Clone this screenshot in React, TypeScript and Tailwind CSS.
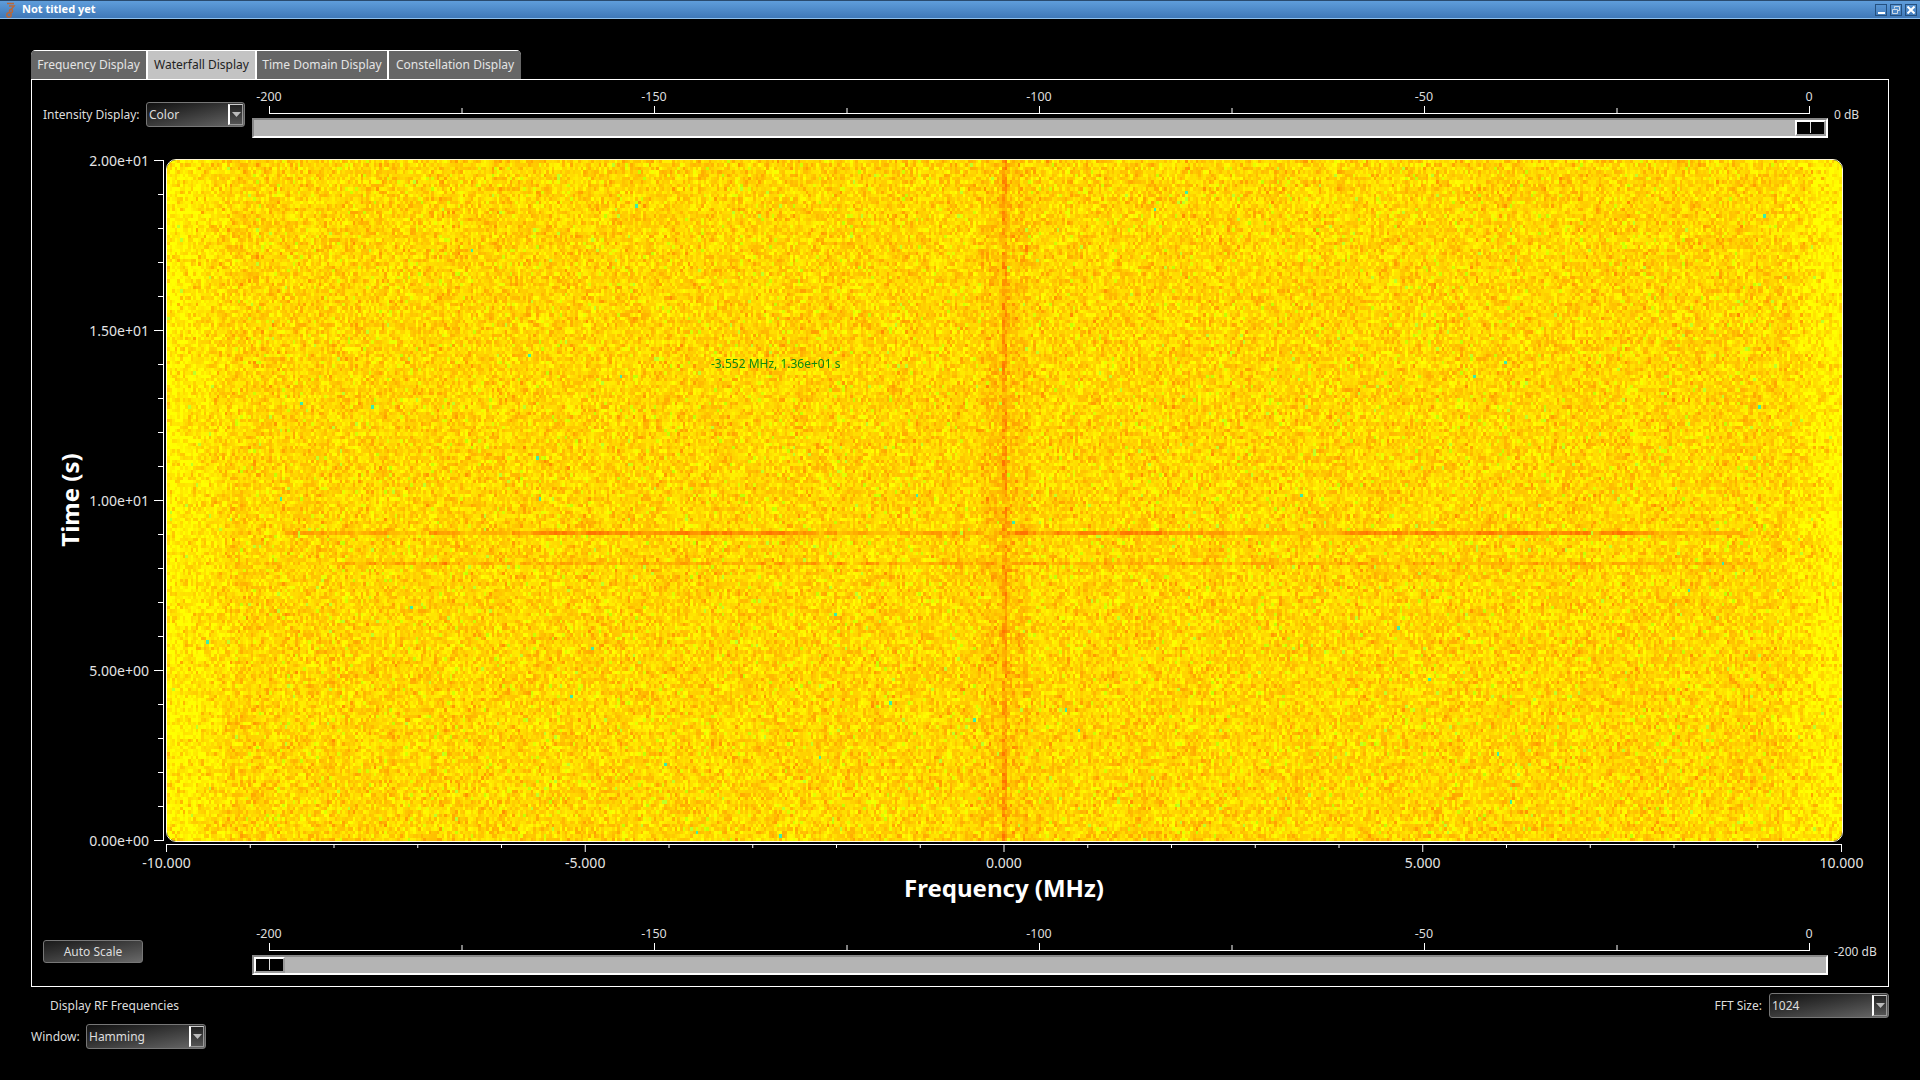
import React, { useEffect, useRef } from 'react';

const font = { fontFamily: '"Noto Sans", sans-serif' };

// tick positions of the dB scale above and below the plot
function DbScale() {
  const ticks = [];
  for (let i = 0; i <= 8; i++) {
    const x = 17.5 + i * 192.5;
    ticks.push(<line key={i} x1={x} x2={x} y1={i % 2 === 0 ? 16 : 18} y2={24} stroke="#fff" />);
  }
  const labels = ['-200', '-150', '-100', '-50', '0'];
  return (
    <svg width="1576" height="24" className="block overflow-visible">
      <line x1="17" x2="1558" y1="23.5" y2="23.5" stroke="#fff" />
      {ticks}
      {labels.map((t, i) => (
        <text key={t} x={17 + i * 385} y="11" fontSize="12.5" fill="#ddd" textAnchor="middle" style={font}>{t}</text>
      ))}
    </svg>
  );
}

function Slider({ right }: { right?: boolean }) {
  return (
    <div className={`w-[1576px] h-[20px] mt-[4px] bg-[#b4b4b4] border-t-2 border-l-2 border-t-[#888] border-l-[#888] border-b-2 border-r-2 border-b-white border-r-white flex ${right ? 'justify-end' : 'justify-start'}`}>
      <div className="w-[31px] h-[16px] bg-black border-2 border-t-white border-l-white border-r-[#999] border-b-[#999] flex items-start justify-center">
        <div className="w-[1px] h-[11px] bg-[#ddd]" />
      </div>
    </div>
  );
}

function Combo({ value, width }: { value: string; width: string }) {
  return (
    <div className={`${width} h-[25px] rounded-[3px] border border-[#777] bg-gradient-to-br from-[#111] to-[#6a6a6a] flex items-center justify-between pl-[2px] pr-[1px] text-[12px] text-[#ddd]`}>
      <span className="pt-[1px]">{value}</span>
      <div className="w-[15px] h-[21px] bg-gradient-to-b from-[#222] to-[#555] border-l-2 border-l-white border-t border-t-[#ccc] border-b border-b-[#999] border-r border-r-[#999] flex items-center justify-center">
        <svg width="9" height="5" viewBox="0 0 9 5"><path d="M0 0h9L4.5 5z" fill="#bbb" /></svg>
      </div>
    </div>
  );
}

function Tab({ label, width, active }: { label: string; width: string; active?: boolean }) {
  return (
    <div className={`${width} h-full flex items-center justify-center text-[12px] border-t border-t-white ${active ? 'bg-[#c3c3c3] text-[#222]' : 'bg-[#666] text-[#e4e4e4]'}`}>
      {label}
    </div>
  );
}

function YAxis() {
  const labels = ['2.00e+01', '1.50e+01', '1.00e+01', '5.00e+00', '0.00e+00'];
  const ticks = [];
  for (let i = 0; i <= 20; i++) {
    const y = 1.5 + i * 34;
    ticks.push(<line key={i} x1={i % 5 === 0 ? 122 : 126} x2="132" y1={y} y2={y} stroke="#fff" />);
  }
  return (
    <svg width="134" height="683" className="block overflow-visible shrink-0">
      <line x1="131.5" x2="131.5" y1="1" y2="682" stroke="#fff" />
      {ticks}
      {labels.map((t, i) => (
        <text key={t} x="117" y={6.5 + i * 170} fontSize="14" fill="#e4e4e4" textAnchor="end" style={font}>{t}</text>
      ))}
      <text transform="translate(47 341) rotate(-90)" fontSize="24" fontWeight="700" fill="#fff" textAnchor="middle" style={font}>Time (s)</text>
    </svg>
  );
}

function XAxis() {
  const labels = ['-10.000', '-5.000', '0.000', '5.000', '10.000'];
  const ticks = [];
  for (let i = 0; i <= 20; i++) {
    const x = 134.5 + i * 83.75;
    ticks.push(<line key={i} x1={x} x2={x} y1="2" y2={i % 5 === 0 ? 10 : 6} stroke="#fff" />);
  }
  return (
    <svg width="1856" height="85" className="block overflow-visible">
      <line x1="134" x2="1810" y1="2.5" y2="2.5" stroke="#fff" />
      {ticks}
      {labels.map((t, i) => (
        <text key={t} x={134.5 + i * 418.75} y="26" fontSize="14" fill="#e4e4e4" textAnchor="middle" style={font}>{t}</text>
      ))}
      <text x="972" y="55" fontSize="24" fontWeight="700" fill="#fff" textAnchor="middle" style={font}>Frequency (MHz)</text>
    </svg>
  );
}

function Waterfall() {
  const ref = useRef<HTMLCanvasElement>(null);

  useEffect(() => {
    const ctx = ref.current!.getContext('2d')!;
    const W = 640;
    const H = 200;
    const img = ctx.createImageData(W, H);
    let seed = 12345;
    const rnd = () => {
      seed = (seed * 1664525 + 1013904223) >>> 0;
      return seed / 4294967296;
    };
    const gauss = () => (rnd() + rnd() + rnd() + rnd() - 2) * 1.7;

    let seg1 = 0.5;
    let seg2 = 0.5;

    for (let y = 0; y < H; y++) {
      for (let x = 0; x < W; x++) {
        const f = x / W;
        let g = 213 + gauss() * 25;
        if (rnd() < 0.06) g += 30 * rnd() + 8;
        const d = Math.abs(x - 319.5);
        if (d < 1.5) g -= 42 + rnd() * 28;
        else if (d < 9) g -= 13;
        if (x % 4 === 0) {
          seg1 = rnd();
          seg2 = rnd();
        }
        // the two horizontal bursts
        if (y === 109 && f > 0.07 && f < 0.94) {
          const strong = (f > 0.22 && f < 0.38) || (f > 0.5 && f < 0.6) || (f > 0.7 && f < 0.89);
          g = 198 + gauss() * 12 - (strong ? 32 + seg1 * 48 : seg1 * 42);
        }
        if (y === 118 && f > 0.1 && f < 0.95) {
          g = 198 + gauss() * 18 - seg2 * 36;
        }
        // filter roll off at both edges, stays pure yellow
        const edge = Math.min(f, 1 - f);
        if (edge < 0.04) g = Math.min(255, g + 32 * (1 - edge / 0.04));
        let r = 255;
        let b = 0;
        if (g > 255) {
          r = Math.max(195, 255 - (g - 255) * 2.2);
          g = 255;
        }
        if (rnd() < 0.004) {
          r = 190;
          g = 255;
          b = 40;
        }
        if (rnd() < 0.0002) {
          r = 60;
          g = 235;
          b = 170;
        }
        const i = (y * W + x) * 4;
        img.data[i] = r;
        img.data[i + 1] = Math.max(115, g);
        img.data[i + 2] = b;
        img.data[i + 3] = 255;
      }
    }
    ctx.putImageData(img, 0, 0);
  }, []);

  return (
    <div className="relative w-[1677px] h-[683px] rounded-[10px] border border-[#fff8d8] overflow-hidden">
      <canvas ref={ref} width={640} height={200} className="block w-full h-full [image-rendering:pixelated]" />
      <span className="absolute left-[544px] top-[195px] text-[12px] text-[#0e8a10]">-3.552 MHz, 1.36e+01 s</span>
    </div>
  );
}

export default function App() {
  return (
    <div className="w-[1920px] h-[1080px] bg-black overflow-hidden text-[#ddd]" style={font}>
      {/* Title bar */}
      <div className="h-[19px] bg-gradient-to-b from-[#5f9ddb] to-[#3f78b8] border-t border-t-[#2a4a6e] border-b border-b-[#8fc0ee] flex items-center pl-[4px] pr-[3px]">
        <svg width="14" height="16" viewBox="0 0 14 16" fill="none" stroke="#b9683a" strokeWidth="1.5">
          <path d="M3 1.5h7M5 4h5l-3 3.5" />
          <circle cx="7" cy="9" r="1.6" />
          <circle cx="5" cy="13" r="2.2" />
        </svg>
        <span className="ml-[4px] text-[11px] font-bold text-white">Not titled yet</span>
        <div className="ml-auto flex gap-[3px]">
          <div className="w-[12px] h-[12px] border border-[#24507f] flex items-end justify-center pb-[1px]">
            <div className="w-[7px] h-[2px] bg-white" />
          </div>
          <div className="w-[12px] h-[12px] border border-[#24507f] flex items-center justify-center">
            <svg width="8" height="8" viewBox="0 0 8 8" fill="none" stroke="#cbd9e6"><path d="M2.5 2.5V.5h5v4h-2M.5 3.5h5v4h-5z" /></svg>
          </div>
          <div className="w-[12px] h-[12px] border border-[#24507f] flex items-center justify-center">
            <svg width="8" height="8" viewBox="0 0 8 8" stroke="#fff" strokeWidth="2"><path d="M.5.5l7 7M7.5.5l-7 7" /></svg>
          </div>
        </div>
      </div>

      <div className="px-[31px] pt-[31px]">
        {/* Tabs */}
        <div className="h-[29px] flex gap-[2px] w-[490px] rounded-t-[5px] overflow-hidden bg-white">
          <Tab label="Frequency Display" width="w-[115px]" />
          <Tab label="Waterfall Display" width="w-[107px]" active />
          <Tab label="Time Domain Display" width="w-[130px]" />
          <Tab label="Constellation Display" width="w-[132px]" />
        </div>

        {/* Panel */}
        <div className="w-[1858px] h-[908px] border border-white pt-[10px]">
          <div className="flex h-[48px]">
            <div className="w-[220px] pl-[11px] mt-[12px] flex items-start">
              <span className="w-[103px] h-[25px] flex items-center whitespace-nowrap text-[12px] pt-[1px]">Intensity Display:</span>
              <Combo value="Color" width="w-[99px]" />
            </div>
            <div>
              <DbScale />
              <Slider right />
            </div>
            <span className="ml-[6px] mt-[15px] text-[12px] leading-[20px]">0 dB</span>
          </div>

          <div className="flex mt-[21px]">
            <YAxis />
            <Waterfall />
          </div>
          <XAxis />

          <div className="flex h-[48px]">
            <div className="w-[220px] pl-[11px] mt-[13px]">
              <button className="w-[100px] h-[23px] rounded-[3px] border border-[#777] bg-gradient-to-br from-[#1a1a1a] to-[#6a6a6a] text-[12px] pt-[1px] text-[#ddd] flex items-center justify-center">
                Auto Scale
              </button>
            </div>
            <div>
              <DbScale />
              <Slider />
            </div>
            <span className="ml-[6px] mt-[15px] text-[12px] leading-[20px]">-200 dB</span>
          </div>
        </div>

        {/* Footer controls */}
        <div className="w-[1858px] mt-[6px] flex items-center">
          <span className="ml-[19px] text-[12px] pt-[1px]">Display RF Frequencies</span>
          <span className="ml-auto mr-[7px] text-[12px] pt-[1px]">FFT Size:</span>
          <Combo value="1024" width="w-[120px]" />
        </div>
        <div className="mt-[6px] flex items-center">
          <span className="w-[55px] text-[12px] pt-[1px]">Window:</span>
          <Combo value="Hamming" width="w-[120px]" />
        </div>
      </div>
    </div>
  );
}
